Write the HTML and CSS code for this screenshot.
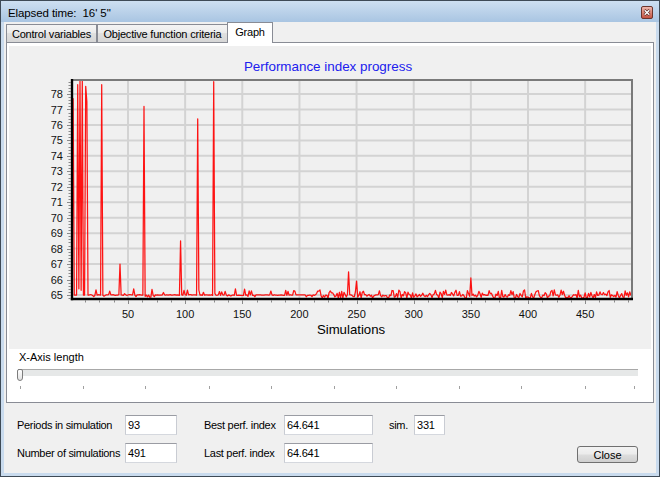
FILE: index.html
```html
<!DOCTYPE html>
<html lang="en">
<head>
<meta charset="utf-8">
<title>Elapsed time</title>
<link rel="stylesheet" href="styles.css">
</head>
<body>
<div class="window">
  <div class="titlebar">
    <span class="title">Elapsed time:&nbsp; 16' 5"</span>
    <span class="close-x">
      <svg width="12" height="13" viewBox="0 0 12 13">
        <defs>
          <linearGradient id="cg" x1="0" y1="0" x2="0" y2="1">
            <stop offset="0" stop-color="#efbcb2"/>
            <stop offset="0.5" stop-color="#dc8576"/>
            <stop offset="1" stop-color="#c24f3e"/>
          </linearGradient>
        </defs>
        <rect x="0.5" y="0.5" width="11" height="12" rx="1.5" fill="url(#cg)" stroke="#6b352d"/>
        <path d="M3.5 4 L8.5 9 M8.5 4 L3.5 9" stroke="#5a2c25" stroke-width="2.8"/>
        <path d="M3.7 4.2 L8.3 8.8 M8.3 4.2 L3.7 8.8" stroke="#ffffff" stroke-width="1.4"/>
      </svg>
    </span>
  </div>
  <div class="client">
    <div class="tabs">
      <div class="tab t1">Control variables</div>
      <div class="tab t2">Objective function criteria</div>
      <div class="tab t3 active">Graph</div>
    </div>
    <div class="panel">
      <div class="chart">
        <svg id="chart" class="chart-svg" width="642" height="303" viewBox="9 46 642 303"></svg>
      </div>
      <div class="slider-area">
        <div class="slider-label">X-Axis length</div>
        <div class="slider">
          <div class="track"></div>
          <div class="thumb"></div>
        </div>
        <svg class="ruler" width="640" height="4" viewBox="7 0 640 4">
          <path d="M18.5 0V3 M81.5 0V3 M143.5 0V3 M207.5 0V3 M269.5 0V3 M332.5 0V3 M394.5 0V3 M457.5 0V3 M519.5 0V3 M583.5 0V3 M632.5 0V3"/>
        </svg>
      </div>
    </div>
    <div class="footer">
      <div class="row">
        <span class="lbl l1">Periods in simulation</span>
        <span class="field f1">93</span>
        <span class="lbl l2">Best perf. index</span>
        <span class="field f2">64.641</span>
        <span class="lbl l3">sim.</span>
        <span class="field f3">331</span>
      </div>
      <div class="row">
        <span class="lbl l1">Number of simulations</span>
        <span class="field f1">491</span>
        <span class="lbl l2">Last perf. index</span>
        <span class="field f2">64.641</span>
        <span class="btn">Close</span>
      </div>
    </div>
  </div>
</div>
<script src="script.js"></script>
</body>
</html>
```

FILE: styles.css
```css
html, body {
  margin: 0;
  padding: 0;
}
body {
  width: 660px;
  height: 477px;
  overflow: hidden;
  background: #ffffff;
  font-family: "Liberation Sans", Arial, sans-serif;
  font-size: 11px;
  color: #000;
}
.window {
  box-sizing: border-box;
  width: 660px;
  height: 477px;
  border: 1px solid #3e4a56;
  background: #c9dbee;
  display: flex;
  flex-direction: column;
}
.titlebar {
  flex: none;
  height: 21px;
  display: flex;
  align-items: flex-start;
  padding: 0 6px 0 7px;
  background: linear-gradient(#cddff1, #a9c5e2);
}
.title {
  font-size: 11.5px;
  line-height: 13px;
  margin-top: 6px;
  letter-spacing: -0.1px;
  white-space: pre;
}
.close-x {
  display: block;
  margin-left: auto;
  margin-top: 5px;
  width: 12px;
  height: 13px;
}
.close-x svg {
  display: block;
}
.client {
  flex: 1;
  margin: 0 3px 3px;
  background: #f0f0f0;
  display: flex;
  flex-direction: column;
}
.tabs {
  flex: none;
  height: 20px;
  display: flex;
  align-items: flex-end;
  padding-left: 2px;
  position: relative;
  z-index: 1;
}
.tab {
  box-sizing: border-box;
  height: 18px;
  border: 1px solid #898c95;
  border-bottom: none;
  display: flex;
  align-items: center;
  justify-content: center;
  padding-top: 1px;
  letter-spacing: -0.2px;
  white-space: nowrap;
  background: linear-gradient(#f4f4f4, #ececec 45%, #e0e0e0 50%, #d6d6d6);
}
.t1 { width: 91px; }
.t2 { width: 131px; }
.t3 { width: 46px; margin-left: -1px; }
.tab.active {
  height: 21px;
  margin-bottom: -1px;
  padding-top: 0;
  padding-bottom: 3px;
  background: #ffffff;
}
.panel {
  flex: none;
  box-sizing: border-box;
  height: 361px;
  margin: 0 2px;
  border: 1px solid #898c95;
  background: #ffffff;
  padding: 3px 2px 0;
}
.chart {
  height: 303px;
  background: #f0f0f0;
}
.chart-svg {
  display: block;
}
.chart-svg text {
  font-family: "Liberation Sans", Arial, sans-serif;
}
.chart-title {
  font-size: 13.4px;
  fill: #2020ee;
}
.axis-title {
  font-size: 13.2px;
  fill: #000;
}
.ylab, .xlab {
  font-size: 11px;
  fill: #111;
}
.grid {
  stroke: #d3d3d3;
  stroke-width: 2;
}
.series {
  fill: none;
  stroke: #ff0000;
  stroke-width: 1.25;
  stroke-linejoin: round;
  stroke-opacity: 0.92;
}
.frame-grey {
  stroke: #7a7a7a;
  stroke-width: 2;
}
.axis {
  stroke: #000;
  stroke-width: 2.4;
}
.tick {
  stroke: #8a8a8a;
  stroke-width: 1;
}
.slider-area {
  padding: 0;
}
.slider-label {
  padding-left: 10px;
  margin-top: 1px;
  line-height: 14px;
}
.slider {
  position: relative;
  margin: 5px 0 0 9px;
  width: 620px;
  height: 12px;
}
.track {
  margin-top: 3px;
  height: 6px;
  border-top: 1px solid #a8a8a8;
  background: #e6e8e8;
}
.thumb {
  position: absolute;
  left: -1px;
  top: 0;
  box-sizing: border-box;
  width: 6px;
  height: 12px;
  border: 1px solid #7c7c7c;
  border-radius: 2px 2px 3px 3px;
  background: linear-gradient(#ffffff, #e2e2e2);
}
.ruler {
  display: block;
  margin-top: 5px;
}
.ruler path {
  stroke: #a0a0a0;
  stroke-width: 1;
}
.footer {
  flex: none;
  display: flex;
  flex-direction: column;
  gap: 8px;
  padding: 12px 18px 0 13px;
}
.row {
  display: flex;
  align-items: center;
  height: 20px;
}
.lbl {
  white-space: nowrap;
  letter-spacing: -0.3px;
}
.l1 { width: 108px; }
.l2 { width: 80px; margin-left: 27px; }
.l3 { width: 25px; margin-left: 16px; }
.field {
  box-sizing: border-box;
  height: 20px;
  border: 1px solid #abadb3;
  border-color: #9a9ca3 #c9ccd3 #d5d8de #c9ccd3;
  background: #ffffff;
  padding: 0 2px;
  display: flex;
  align-items: center;
  letter-spacing: -0.2px;
}
.f1 { width: 52px; }
.f2 { width: 89px; }
.f3 { width: 31px; }
.btn {
  box-sizing: border-box;
  margin-left: auto;
  align-self: flex-end;
  width: 61px;
  height: 17px;
  border: 1px solid #707070;
  border-radius: 3px;
  background: linear-gradient(#f3f3f3, #ebebeb 48%, #dddddd 52%, #cfcfcf);
  display: flex;
  align-items: center;
  justify-content: center;
}
```

FILE: script.js
```js
(function () {
  var NS = 'http://www.w3.org/2000/svg';
  var svg = document.getElementById('chart');
  var L = 72, R = 632, T = 80, B = 299;
  function X(s) { return L + (s - 1) * (R - L) / 490; }
  function Y(v) { return 295 - (v - 65) * 15.46; }
  function add(name, attrs, text) {
    var e = document.createElementNS(NS, name);
    for (var k in attrs) e.setAttribute(k, attrs[k]);
    if (text !== undefined) e.textContent = text;
    svg.appendChild(e);
    return e;
  }
  function mulberry32(a) {
    return function () {
      a |= 0; a = a + 0x6D2B79F5 | 0;
      var t = Math.imul(a ^ a >>> 15, 1 | a);
      t = t + Math.imul(t ^ t >>> 7, 61 | t) ^ t;
      return ((t ^ t >>> 14) >>> 0) / 4294967296;
    };
  }

  add('text', { x: 328, y: 71, 'text-anchor': 'middle', 'class': 'chart-title' }, 'Performance index progress');

  var v, s, i;
  for (v = 65; v <= 78; v++) {
    add('line', { x1: L, x2: R, y1: Y(v), y2: Y(v), 'class': 'grid' });
  }
  for (s = 50; s <= 450; s += 50) {
    add('line', { x1: X(s), x2: X(s), y1: T, y2: B, 'class': 'grid' });
  }

  var rand = mulberry32(7);
  var d = [];
  for (s = 1; s <= 491; s++) {
    var r = rand();
    if (s < 215) {
      if (r < 0.15) v = 65.08 + rand() * 0.32;
      else if (r < 0.21) v = 64.86 + rand() * 0.1;
      else v = 64.97 + rand() * 0.05;
    } else {
      if (r < 0.3) v = 65.05 + rand() * 0.28;
      else if (r < 0.62) v = 64.72 + rand() * 0.22;
      else v = 64.94 + rand() * 0.1;
    }
    d.push(v);
  }
  var flat = [1, 3, 4, 5, 11, 12, 15, 16];
  for (i = 0; i < flat.length; i++) d[flat[i] - 1] = 65.0;
  var spikes = {
    2: 77.7, 6: 78.6, 7: 65.4, 8: 79.5, 9: 65.3, 10: 79.5, 13: 78.5, 14: 77.5,
    27: 78.6, 43: 67.0, 64: 77.2, 96: 68.5, 111: 76.4, 125: 78.8,
    243: 66.5, 250: 65.9, 350: 66.1
  };
  for (var k in spikes) d[k - 1] = spikes[k];
  var pts = [];
  for (s = 1; s <= 491; s++) {
    var y = Math.min(B - 1, Math.max(T, Y(d[s - 1])));
    pts.push(X(s).toFixed(2) + ',' + y.toFixed(2));
  }
  add('polyline', { points: pts.join(' '), 'class': 'series' });

  add('line', { x1: L, y1: T, x2: R + 1, y2: T, 'class': 'frame-grey' });
  add('line', { x1: R, y1: T, x2: R, y2: B, 'class': 'frame-grey' });
  add('line', { x1: L, y1: T - 1, x2: L, y2: B + 1.2, 'class': 'axis' });
  add('line', { x1: L - 1.2, y1: B, x2: R + 1, y2: B, 'class': 'axis' });

  for (i = 0; i <= 80; i++) {
    var vv = 64.8 + i * 0.2;
    var ty = Y(vv);
    if (ty < T) break;
    var major = Math.abs(vv - Math.round(vv)) < 0.01;
    add('line', { x1: major ? 67 : 68.5, x2: 71, y1: Math.round(ty) + 0.5, y2: Math.round(ty) + 0.5, 'class': 'tick' });
  }
  for (i = 1; i * 12.5 <= 491; i++) {
    var tx = Math.round(X(i * 12.5)) + 0.5;
    add('line', { x1: tx, x2: tx, y1: B + 1, y2: (i % 4 === 0) ? 304 : 302.5, 'class': 'tick' });
  }

  for (v = 65; v <= 78; v++) {
    add('text', { x: 63, y: (Y(v) + 4).toFixed(1), 'text-anchor': 'end', 'class': 'ylab' }, String(v));
  }
  for (s = 50; s <= 450; s += 50) {
    add('text', { x: X(s).toFixed(1), y: 318, 'text-anchor': 'middle', 'class': 'xlab' }, String(s));
  }
  add('text', { x: 351, y: 334, 'text-anchor': 'middle', 'class': 'axis-title' }, 'Simulations');
})();
```
